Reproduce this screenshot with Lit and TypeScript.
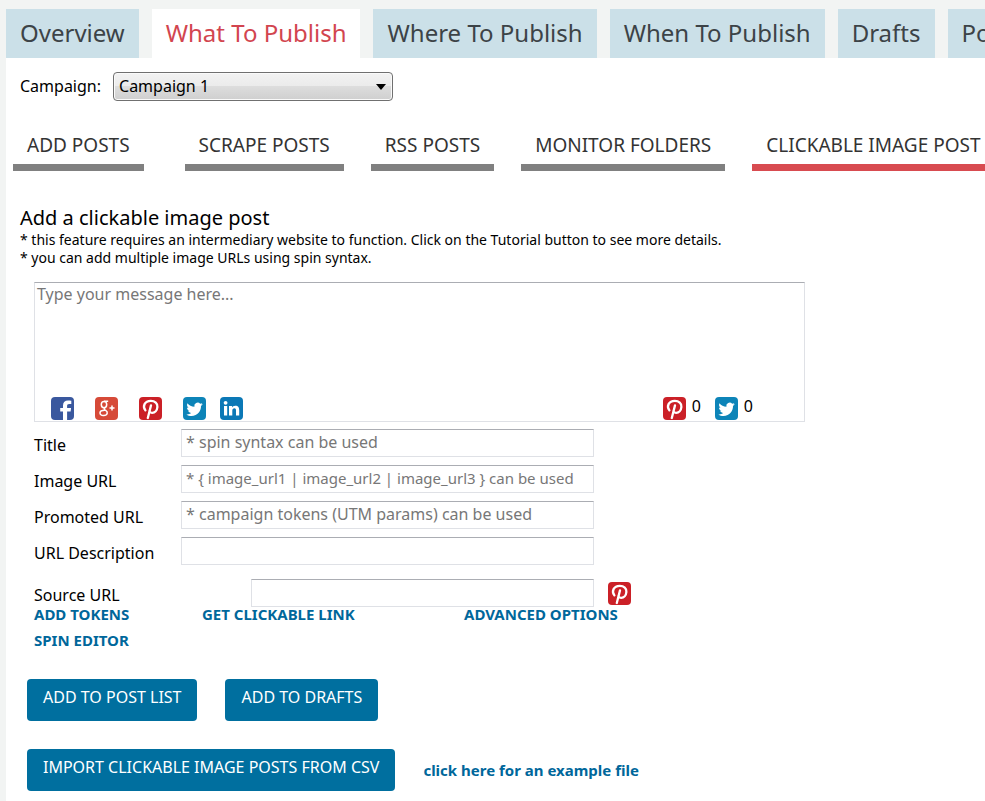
import { LitElement, html, css, svg } from "lit";
import { customElement, property, state } from "lit/decorators.js";
import { classMap } from "lit/directives/class-map.js";

type Network = "facebook" | "google" | "pinterest" | "twitter" | "linkedin";

const glyphs: Record<Network, unknown> = {
  facebook: svg`<path fill="#fff" d="M12 23V14.500H9.200v-3.500H12V8.600C12 5.200 14 3.500 17 3.500c1.500 0 2.900.1 3.300.2v3.400h-2.100c-1.700 0-2.100.8-2.100 1.900v2h4l-.5 3.500h-3.500V23z"/>`,
  google: svg`<g fill="none" stroke="#fff" stroke-width="1.500"><ellipse cx="9" cy="7.600" rx="2.700" ry="3.200"/><path d="M9 4.300h4.200M10 10.700c-1.600 1.300-.6 1.900.7 2.700 1.400.9 1.800 1.900 1.500 3-.5 1.700-2.200 2.300-3.900 2.200-2-.1-3.400-1.200-3.300-2.700.1-1.900 2.300-2.700 5.200-2.600M17 8.500v5M14.500 11h5"/></g>`,
  pinterest: svg`<path fill="none" stroke="#fff" stroke-width="2.300" stroke-linecap="round" d="M6.400 13.400C3.200 9.300 5.600 3.900 11.800 3.900c4.200 0 6.900 2.500 6.600 6-.3 3.600-2.500 6-5.400 5.900-1.500 0-2.300-.8-2.600-1.700M12 8.400 8.800 21"/>`,
  twitter: svg`<path fill="#fff" d="M19.800 7.100c-.6.300-1.200.5-1.900.5.700-.4 1.100-1 1.400-1.700-.6.400-1.300.6-2.100.8a3.400 3.400 0 0 0-5.800 3.100C8.600 9.700 6.100 8.400 4.500 6.300c-.9 1.600-.4 3.500 1 4.500-.5 0-1-.2-1.500-.4 0 1.600 1.100 3 2.700 3.300-.5.100-1 .2-1.500.1.400 1.300 1.600 2.200 3.100 2.300-1.400 1.100-3.200 1.600-4.900 1.400 1.500 1 3.200 1.500 5.100 1.500 6.200 0 9.700-5.300 9.500-10 .7-.5 1.300-1.100 1.800-1.900z"/>`,
  linkedin: svg`<path fill="#fff" d="M4 9h3.200v9.500H4zM9 9h3v1.400c.5-.9 1.600-1.700 3.300-1.700 3.100 0 3.900 1.900 3.900 4.700v5.100H16v-4.700c0-1.400-.2-2.500-1.600-2.500s-2.100 1-2.100 2.500v4.700H9z"/><circle cx="5.600" cy="5.800" r="1.900" fill="#fff"/>`,
};

@customElement("social-icon")
export class SocialIcon extends LitElement {
  @property() network: Network = "facebook";

  static styles = css`
    :host { display: block; width: 23px; height: 23px; flex: none; }
    .tile { display: block; width: 100%; height: 100%; border-radius: 4px; }
    .facebook { background: #3a589e; }
    .google { background: #d64a38; }
    .pinterest { background: #cb2027; }
    .twitter { background: #0d84b8; }
    .linkedin { background: #0b78b6; }
  `;

  render() {
    return html`<svg class="tile ${this.network}" viewBox="0 0 23 23" role="img" aria-label=${this.network}>${glyphs[this.network]}</svg>`;
  }
}

const sections = ["Overview", "What To Publish", "Where To Publish", "When To Publish", "Drafts", "Posts"];
const sources = ["ADD POSTS", "SCRAPE POSTS", "RSS POSTS", "MONITOR FOLDERS", "CLICKABLE IMAGE POST"];
const fields = [
  { id: "title", label: "Title", hint: "* spin syntax can be used" },
  { id: "image-url", label: "Image URL", hint: "* { image_url1 | image_url2 | image_url3 } can be used", long: true },
  { id: "promoted-url", label: "Promoted URL", hint: "* campaign tokens (UTM params) can be used" },
  { id: "url-description", label: "URL Description", hint: "" },
];

@customElement("app-root")
export class AppRoot extends LitElement {
  @state() private section = "What To Publish";
  @state() private source = "CLICKABLE IMAGE POST";

  static styles = css`
    :host {
      display: block;
      min-height: 100vh;
      box-sizing: border-box;
      padding: 9px 0 0 6px;
      overflow: hidden;
      background: #f2f4f3;
      color: #000;
      font: 16px/22px "Noto Sans", "Open Sans", sans-serif;
    }
    button, input, select, textarea { font: inherit; color: inherit; box-sizing: border-box; }
    .sections { display: flex; gap: 13px; }
    .section {
      flex: none;
      height: 49px;
      padding: 0 14px 2px;
      border: 0;
      background: #cbe0e8;
      color: #3c4347;
      font-size: 24px;
      line-height: 46px;
      cursor: pointer;
    }
    .section.active { background: #fff; color: #d2454f; }
    .panel { background: #fff; min-height: calc(100vh - 58px); box-sizing: border-box; padding: 14px 0 10px; }
    .campaign { display: flex; align-items: center; gap: 12px; padding-left: 14px; }
    .campaign label { padding-bottom: 2px; }
    .picker { position: relative; width: 280px; }
    .picker::after {
      content: "";
      position: absolute;
      right: 7px;
      top: 12px;
      border: 5px solid transparent;
      border-top: 6px solid #000;
      border-bottom: 0;
      pointer-events: none;
    }
    .picker select {
      display: block;
      appearance: none;
      width: 100%;
      height: 29px;
      padding: 0 24px 2px 5px;
      border: 1px solid #707070;
      border-radius: 4px;
      background: linear-gradient(#f2f2f2, #ebebeb 50%, #dddddd 50%, #cfcfcf);
      box-shadow: inset 0 0 0 1px #fafafa;
    }
    .sources { display: flex; gap: 27px; padding-left: 7px; margin-top: 29px; }
    .source {
      flex: none;
      height: 41px;
      padding: 0 14px 5px;
      border: 0;
      border-bottom: 7px solid #808080;
      background: none;
      color: #333;
      font-size: 19px;
      line-height: 26px;
      cursor: pointer;
    }
    .source:first-child { margin-right: 14px; }
    .source.active { border-color: #d84b50; }
    .intro { margin: 33px 0 0 14px; }
    .intro h1 { margin: 0; font-size: 20px; font-weight: 400; line-height: 27px; }
    .intro p { margin: 0; font-size: 14px; line-height: 18px; }
    .composer {
      display: flex;
      flex-direction: column;
      box-sizing: border-box;
      max-width: 771px;
      height: 140px;
      margin: 15px 28px 0;
      border: 1px solid #dfe1e6;
      border-top-color: #abadb3;
    }
    .composer textarea { flex: 1; resize: none; border: 0; outline: 0; padding: 0 2px; background: none; }
    ::placeholder { color: #777; opacity: 1; }
    .networks { display: flex; align-items: center; padding: 0 51px 1px 16px; }
    .targets { display: flex; gap: 21px; flex: 1; }
    .linkedin { margin-left: -7px; }
    .counts { display: flex; gap: 14px; }
    .count { display: flex; gap: 6px; line-height: 19px; }
    .form { max-width: 560px; margin: 7px 28px 0; }
    .field { display: grid; grid-template-columns: 147px 1fr; margin-bottom: 8px; }
    .field label { padding-top: 5px; }
    .field input {
      width: 100%;
      height: 28px;
      padding: 0 4px 2px;
      border: 1px solid #dfe1e6;
      border-top-color: #abadb3;
      background: #fff;
    }
    .field .long { font-size: 15px; }
    .field.wide { grid-template-columns: 217px 1fr 23px; margin: 14px -37px 0 0; }
    .wide social-icon { margin-top: 3px; }
    .wide input { width: calc(100% - 14px); }
    a { color: #00679b; font-weight: 700; text-decoration: none; font-size: 15px; }
    .links { display: grid; grid-template-columns: 168px 262px auto; justify-content: start; margin-left: 28px; line-height: 26px; margin-top: -6px; }
    .actions { display: flex; align-items: center; gap: 28px; margin: 26px 0 28px 21px; }
    .actions.last { margin: 0 0 0 21px; }
    .action {
      height: 42px;
      padding: 0 16px 7px;
      border: 0;
      border-radius: 4px;
      background: #006f9f;
      color: #fff;
      cursor: pointer;
    }
  `;

  render() {
    return html`
      <nav class="sections" aria-label="Sections">
        ${sections.map((name) => html`
          <button class=${classMap({ section: true, active: name === this.section })} @click=${() => (this.section = name)}>${name}</button>`)}
      </nav>
      <main class="panel">
        <div class="campaign">
          <label for="campaign">Campaign:</label>
          <div class="picker"><select id="campaign"><option>Campaign 1</option></select></div>
        </div>
        <nav class="sources" aria-label="Post sources">
          ${sources.map((name) => html`
            <button class=${classMap({ source: true, active: name === this.source })} @click=${() => (this.source = name)}>${name}</button>`)}
        </nav>
        <header class="intro">
          <h1>Add a clickable image post</h1>
          <p>* this feature requires an intermediary website to function. Click on the Tutorial button to see more details.</p>
          <p>* you can add multiple image URLs using spin syntax.</p>
        </header>
        <div class="composer">
          <textarea aria-label="Message" placeholder="Type your message here..."></textarea>
          <div class="networks">
            <div class="targets">
              <social-icon network="facebook"></social-icon>
              <social-icon network="google"></social-icon>
              <social-icon network="pinterest"></social-icon>
              <social-icon network="twitter"></social-icon>
              <social-icon class="linkedin" network="linkedin"></social-icon>
            </div>
            <div class="counts">
              <span class="count"><social-icon network="pinterest"></social-icon>0</span>
              <span class="count"><social-icon network="twitter"></social-icon>0</span>
            </div>
          </div>
        </div>
        <form class="form">
          ${fields.map((f) => html`
            <div class="field">
              <label for=${f.id}>${f.label}</label>
              <input id=${f.id} class=${classMap({ long: !!f.long })} type="text" placeholder=${f.hint} />
            </div>`)}
          <div class="field wide">
            <label for="source-url">Source URL</label>
            <input id="source-url" type="text" />
            <social-icon network="pinterest"></social-icon>
          </div>
        </form>
        <div class="links">
          <a href="#tokens">ADD TOKENS</a>
          <a href="#link">GET CLICKABLE LINK</a>
          <a href="#advanced">ADVANCED OPTIONS</a>
          <a href="#spin">SPIN EDITOR</a>
        </div>
        <div class="actions">
          <button class="action">ADD TO POST LIST</button>
          <button class="action">ADD TO DRAFTS</button>
        </div>
        <div class="actions last">
          <button class="action">IMPORT CLICKABLE IMAGE POSTS FROM CSV</button>
          <a href="#example">click here for an example file</a>
        </div>
      </main>
    `;
  }
}
